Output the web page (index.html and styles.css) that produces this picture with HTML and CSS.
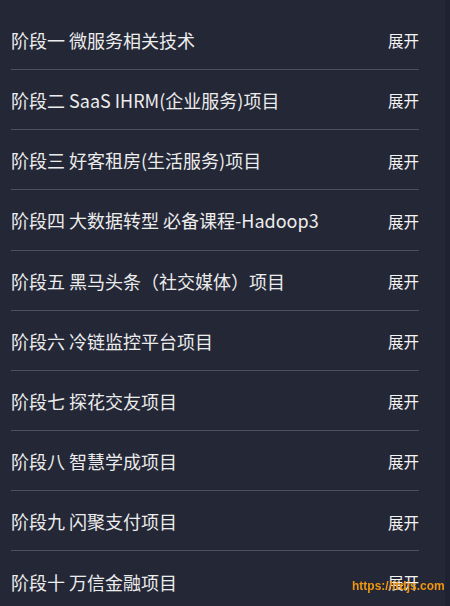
FILE: index.html
```html
<!DOCTYPE html>
<html lang="zh">
<head>
    <meta charset="UTF-8">
    <meta name="viewport" content="width=device-width, initial-scale=1.0">
    <title>课程目录</title>
    <link rel="stylesheet" href="styles.css">
</head>
<body>

    <div class="page">
        <ul class="stages">
            <li class="stage"><span class="stage-title">阶段一 微服务相关技术</span><span class="toggle">展开</span></li>
            <li class="stage"><span class="stage-title">阶段二 SaaS IHRM(企业服务)项目</span><span class="toggle">展开</span></li>
            <li class="stage"><span class="stage-title">阶段三 好客租房(生活服务)项目</span><span class="toggle">展开</span></li>
            <li class="stage"><span class="stage-title">阶段四 大数据转型 必备课程-Hadoop3</span><span class="toggle">展开</span></li>
            <li class="stage"><span class="stage-title">阶段五 黑马头条（社交媒体）项目</span><span class="toggle">展开</span></li>
            <li class="stage"><span class="stage-title">阶段六 冷链监控平台项目</span><span class="toggle">展开</span></li>
            <li class="stage"><span class="stage-title">阶段七 探花交友项目</span><span class="toggle">展开</span></li>
            <li class="stage"><span class="stage-title">阶段八 智慧学成项目</span><span class="toggle">展开</span></li>
            <li class="stage"><span class="stage-title">阶段九 闪聚支付项目</span><span class="toggle">展开</span></li>
            <li class="stage"><span class="stage-title">阶段十 万信金融项目</span><span class="toggle">展开</span></li>
        </ul>
        <div class="scroll-strip"></div>
    </div>

    <div class="watermark">https://itdjs.com</div>

</body>
</html>
```

FILE: styles.css
```css
body {
    margin: 0;
    background: #242736;
    font-family: "Noto Sans CJK SC", "Microsoft YaHei", sans-serif;
    color: #ececec;
    overflow: hidden;
}

.page {
    display: flex;
    height: 606px;
}

.stages {
    list-style: none;
    margin: 0;
    padding: 9.8px 0 0 11px;
    width: 408px;
}

.stage {
    display: flex;
    align-items: center;
    justify-content: space-between;
    height: 59.2px;
    border-bottom: 1px solid #4c4f5d;
}

.stage-title {
    font-size: 18px;
    line-height: 1;
    margin-top: 1px;
}

.toggle {
    font-size: 15.5px;
    line-height: 1;
    color: #f4f4f4;
    margin-top: 3px;
}

.scroll-strip {
    margin-left: auto;
    width: 5px;
    background: #1f2230;
}

/* 右下角水印 */
.watermark {
    position: fixed;
    left: 352px;
    top: 579px;
    font-family: "Liberation Sans", Arial, sans-serif;
    font-size: 12px;
    font-weight: bold;
    color: #f0960f;
}
```
